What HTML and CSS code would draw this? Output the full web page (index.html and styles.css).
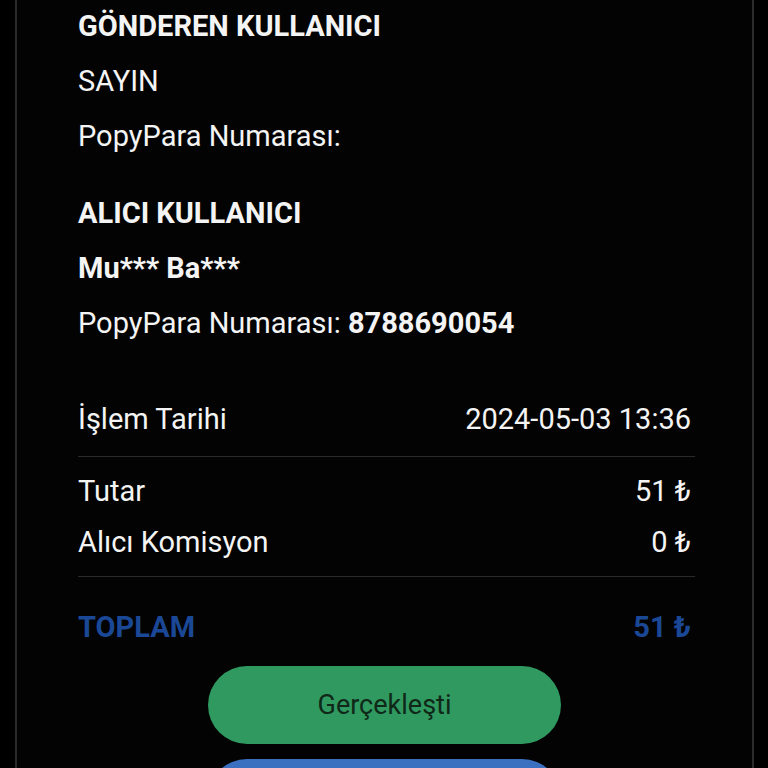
FILE: index.html
```html
<!DOCTYPE html>
<html lang="tr">
<head>
<meta charset="utf-8">
<title>Dekont</title>
<link rel="stylesheet" href="styles.css">
</head>
<body>
<div class="frame">
  <div class="card">
    <section class="block">
      <div class="row title">GÖNDEREN KULLANICI</div>
      <div class="row">SAYIN</div>
      <div class="row">PopyPara Numarası:</div>
    </section>
    <section class="block second">
      <div class="row title">ALICI KULLANICI</div>
      <div class="row strong">Mu*** Ba***</div>
      <div class="row">PopyPara Numarası: <span class="strong">8788690054</span></div>
    </section>
    <div class="line date">
      <span>İşlem Tarihi</span><span>2024-05-03 13:36</span>
    </div>
    <hr class="divider">
    <div class="amounts">
      <div class="line"><span>Tutar</span><span>51 ₺</span></div>
      <div class="line"><span>Alıcı Komisyon</span><span>0 ₺</span></div>
    </div>
    <hr class="divider">
    <div class="line total"><span>TOPLAM</span><span>51 ₺</span></div>
    <div class="actions">
      <button class="btn btn-green">Gerçekleşti</button>
      <button class="btn btn-blue"></button>
    </div>
  </div>
</div>
</body>
</html>
```
FILE: styles.css
```css
* { box-sizing: border-box; }
html, body {
  margin: 0;
  padding: 0;
  background: #000;
  height: 768px;
  overflow: hidden;
}
body {
  font-family: Roboto, "Liberation Sans", sans-serif;
  color: #f4f4f4;
}
.frame {
  padding-left: 15px;
  padding-right: 14px;
  height: 768px;
}
.card {
  height: 100%;
  overflow: hidden;
  border-left: 2px solid #2b2b2b;
  border-right: 2px solid #2b2b2b;
  background: #030303;
  padding: 8px 61px 0 61px;
  display: flex;
  flex-direction: column;
}
.block {
  display: flex;
  flex-direction: column;
  gap: 19px;
}
.block.second { margin-top: 41px; }
.row {
  height: 36px;
  line-height: 36px;
  font-size: 29px;
  white-space: nowrap;
}
.title {
  font-weight: 700;
  font-size: 29px;
}
.strong { font-weight: 700; }
.line {
  display: flex;
  justify-content: space-between;
  height: 36px;
  line-height: 36px;
  font-size: 29px;
  white-space: nowrap;
}
.date { margin-top: 60px; }
.divider {
  border: 0;
  border-top: 1px solid #2a2a2a;
  margin: 19px 0 0 0;
  height: 0;
  width: calc(100% + 4px);
}
.amounts {
  margin-top: 16px;
  display: flex;
  flex-direction: column;
  gap: 15px;
}
.amounts + .divider { margin-top: 16px; }
.total {
  margin-top: 32px;
  color: #1b4896;
  font-weight: 700;
}
.actions {
  margin-top: 21px;
  display: flex;
  flex-direction: column;
  align-items: center;
  gap: 15px;
}
.btn {
  width: 353px;
  height: 78px;
  border: 0;
  border-radius: 39px;
  font-family: Roboto, "Liberation Sans", sans-serif;
  font-size: 27px;
  color: #0f2818;
  flex: none;
}
.btn-green { background: #2f9960; }
.btn-blue { background: #3b6fc0; }
```
